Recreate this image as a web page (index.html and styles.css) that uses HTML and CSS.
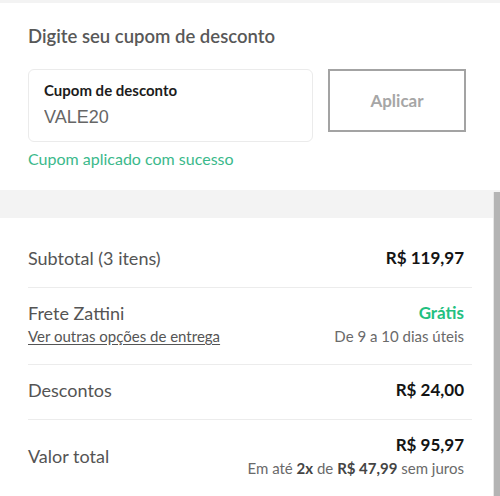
FILE: index.html
```html
<!DOCTYPE html>
<html>
  <head>
    <meta charset="UTF-8">
    <title>Resumo do pedido</title>
    <link rel="stylesheet" href="styles.css">
  </head>
  <body>
    <div class="topbar"></div>

    <!-- Cupom -->
    <div class="coupon">
      <h3 class="coupon-title">Digite seu cupom de desconto</h3>
      <div class="coupon-row">
        <div class="field">
          <label for="cupom">Cupom de desconto</label>
          <input type="text" id="cupom" value="VALE20">
        </div>
        <button class="apply">Aplicar</button>
      </div>
      <p class="success">Cupom aplicado com sucesso</p>
    </div>

    <div class="band"></div>

    <!-- Resumo -->
    <div class="summary">
      <div class="row">
        <span class="label">Subtotal (3 itens)</span>
        <span class="value">R$ 119,97</span>
      </div>
      <div class="row">
        <div class="col">
          <span class="label">Frete Zattini</span>
          <a href="#" class="link">Ver outras opções de entrega</a>
        </div>
        <div class="col right">
          <span class="value green">Grátis</span>
          <span class="small">De 9 a 10 dias úteis</span>
        </div>
      </div>
      <div class="row">
        <span class="label">Descontos</span>
        <span class="value">R$ 24,00</span>
      </div>
      <div class="row total">
        <span class="label">Valor total</span>
        <div class="col right">
          <span class="value">R$ 95,97</span>
          <span class="small">Em até <b>2x</b> de <b>R$ 47,99</b> sem juros</span>
        </div>
      </div>
    </div>

    <div class="scrollbar"></div>
  </body>
</html>
```

FILE: styles.css
```css
body { margin: 0; font-family: Lato, "Open Sans", sans-serif; background: #fff; color: #222; }
.topbar { height: 3px; background: #f3f3f3; }

.coupon { padding: 21px 28px 0; height: 187px; box-sizing: border-box; }
.coupon-title { margin: 0; font-size: 18.5px; line-height: 24px; font-weight: 600; color: #585858; }
.coupon-row { display: flex; gap: 15px; margin-top: 21px; align-items: flex-start; }
.field { width: 285px; height: 73px; box-sizing: border-box; border: 1px solid #ebebeb; border-radius: 6px; padding: 10px 15px 0; }
.field label { display: block; font-size: 15px; line-height: 20px; font-weight: 700; color: #1c1c1c; }
.field input { display: block; border: 0; padding: 0; margin-top: 6px; width: 100%; font-family: "Liberation Sans", Arial, sans-serif; font-size: 18px; line-height: 22px; color: #666; outline: none; }
.apply { width: 138px; height: 63px; background: #fff; border: 2px solid #a3a3a3; font-family: inherit; font-size: 17px; font-weight: 700; color: #a6a6a6; }
.success { margin: 7px 0 0; font-size: 16px; line-height: 20px; color: #3bb98b; }

.band { height: 28px; background: #f3f3f3; }

.summary { margin: 0 28px; padding-top: 15px; width: 444px; }
.row { display: flex; justify-content: space-between; padding: 14px 8px 18px 0; border-bottom: 1px solid #ececec; }
.row.total { border-bottom: 0; align-items: center; }
.col { display: flex; flex-direction: column; }
.right { align-items: flex-end; }
.label { font-size: 18px; line-height: 22px; color: #545454; }
.value { font-size: 17px; line-height: 22px; font-weight: 700; color: #141414; }
.green { color: #22c07f; }
.link { font-size: 15px; line-height: 20px; margin-top: 2px; color: #555; text-decoration: underline; text-underline-offset: 2px; }
.small { font-size: 15px; line-height: 20px; margin-top: 2px; color: #6a6a6a; }
.small b { color: #444; }

.scrollbar { position: absolute; top: 192px; right: 0; bottom: 0; width: 6px; background: #b4b4b4; border-left: 1px solid #e6e6e6; }
```
